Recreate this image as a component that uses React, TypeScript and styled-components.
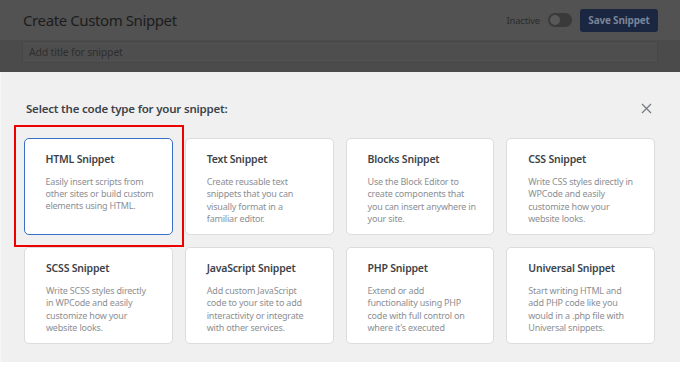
import * as React from "react";
import styled, { createGlobalStyle } from "styled-components";

interface SnippetType {
  title: string;
  lines: string[];
}

// descriptions kept with the same line breaks as the design
const snippetTypes: SnippetType[] = [
  { title: "HTML Snippet", lines: ["Easily insert scripts from", "other sites or build custom", "elements using HTML."] },
  { title: "Text Snippet", lines: ["Create reusable text", "snippets that you can", "visually format in a", "familiar editor."] },
  { title: "Blocks Snippet", lines: ["Use the Block Editor to", "create components that", "you can insert anywhere in", "your site."] },
  { title: "CSS Snippet", lines: ["Write CSS styles directly in", "WPCode and easily", "customize how your", "website looks."] },
  { title: "SCSS Snippet", lines: ["Write SCSS styles directly", "in WPCode and easily", "customize how your", "website looks."] },
  { title: "JavaScript Snippet", lines: ["Add custom JavaScript", "code to your site to add", "interactivity or integrate", "with other services."] },
  { title: "PHP Snippet", lines: ["Extend or add", "functionality using PHP", "code with full control on", "where it's executed"] },
  { title: "Universal Snippet", lines: ["Start writing HTML and", "add PHP code like you", "would in a .php file with", "Universal snippets."] },
];

const App: React.FC = () => {
  return (
    <>
      <GlobalStyle />
      <Page>
        <TopBar>
          <PageTitle>Create Custom Snippet</PageTitle>
          <Actions>
            <StatusLabel>Inactive</StatusLabel>
            <Toggle />
            <SaveButton>Save Snippet</SaveButton>
          </Actions>
        </TopBar>
        <TitleRow>
          <TitleInput>Add title for snippet</TitleInput>
        </TitleRow>
        <Modal>
          <ModalHeader>
            <Heading>Select the code type for your snippet:</Heading>
            <CloseIcon width="11" height="11" viewBox="0 0 11 11">
              <path d="M1 1 L10 10 M10 1 L1 10" stroke="#787c82" strokeWidth="1.3" />
            </CloseIcon>
          </ModalHeader>
          <Grid>
            {snippetTypes.map((s, i) => (
              <Card key={s.title} selected={i === 0}>
                <CardTitle>{s.title}</CardTitle>
                <CardText>
                  {s.lines.map((l) => (
                    <Line key={l}>{l}</Line>
                  ))}
                </CardText>
              </Card>
            ))}
          </Grid>
          <Highlight />
        </Modal>
      </Page>
    </>
  );
};

const GlobalStyle = createGlobalStyle`
  body {
    margin: 0;
    background: #fff;
    font-family: "Noto Sans", "Open Sans", sans-serif;
  }
`;

const Page = styled.div`
  width: 680px;
  height: 365px;
  overflow: hidden;
`;

const TopBar = styled.div`
  height: 40px;
  background: #525252;
  display: flex;
  align-items: center;
  justify-content: space-between;
  padding: 0 22px 0 23px;
  box-sizing: border-box;
`;

const PageTitle = styled.div`
  font-size: 15px;
  letter-spacing: -0.4px;
  color: #1c1c1c;
`;

const Actions = styled.div`
  display: flex;
  align-items: center;
`;

const StatusLabel = styled.span`
  font-size: 9.5px;
  letter-spacing: -0.2px;
  color: #2c2c2c;
  margin-right: 8px;
`;

const Toggle = styled.div`
  width: 24px;
  height: 14px;
  border-radius: 7px;
  background: #3a3a3a;
  position: relative;
  margin-right: 8px;
  &::after {
    content: "";
    position: absolute;
    left: 2px;
    top: 2px;
    width: 10px;
    height: 10px;
    border-radius: 50%;
    background: #595959;
  }
`;

const SaveButton = styled.div`
  width: 78px;
  height: 23px;
  border-radius: 3px;
  background: #1b2640;
  color: #7a8499;
  font-size: 10px;
  letter-spacing: -0.2px;
  font-weight: 700;
  display: flex;
  align-items: center;
  justify-content: center;
`;

const TitleRow = styled.div`
  height: 32px;
  background: #4b4b4b;
  padding: 1px 22px 0 22px;
  box-sizing: border-box;
`;

const TitleInput = styled.div`
  height: 22px;
  border: 1px solid #474747;
  background: #4e4e4e;
  box-sizing: border-box;
  font-size: 10.5px;
  letter-spacing: -0.2px;
  color: #2e2e2e;
  padding-left: 6px;
  display: flex;
  align-items: center;
`;

const Modal = styled.div`
  position: relative;
  height: 290px;
  background: #f0f0f1;
  border-left: 1px solid #f7f7f7;
  padding: 27px 25px 0 23px;
  box-sizing: border-box;
`;

const ModalHeader = styled.div`
  display: flex;
  align-items: center;
  justify-content: space-between;
  height: 18px;
  padding-left: 2px;
`;

const Heading = styled.div`
  font-size: 11.5px;
  letter-spacing: -0.2px;
  font-weight: 600;
  color: #3c434a;
`;

const CloseIcon = styled.svg`
  margin-right: 3px;
`;

const Grid = styled.div`
  display: grid;
  grid-template-columns: repeat(4, 1fr);
  gap: 12px;
  margin-top: 21px;
`;

const Card = styled.div<{ selected?: boolean }>`
  height: 97px;
  box-sizing: border-box;
  background: #fff;
  border: ${(p) => (p.selected ? "1.5px solid #3a6fc4" : "1px solid #dcdcde")};
  border-radius: 5px;
  padding: ${(p) => (p.selected ? "12.5px 8px 0 20.5px" : "13px 8px 0 21px")};
`;

const CardTitle = styled.div`
  font-size: 10.5px;
  letter-spacing: -0.2px;
  font-weight: 600;
  color: #3c434a;
  line-height: 14px;
`;

const CardText = styled.div`
  margin-top: 10px;
  font-size: 9px;
  letter-spacing: -0.2px;
  line-height: 12.3px;
  color: #8c8f94;
`;

const Line = styled.div`
  white-space: nowrap;
`;

const Highlight = styled.div`
  position: absolute;
  left: 13px;
  top: 53px;
  width: 170px;
  height: 122px;
  border: 2px solid #ee0000;
  box-sizing: border-box;
  pointer-events: none;
`;

export default App;
